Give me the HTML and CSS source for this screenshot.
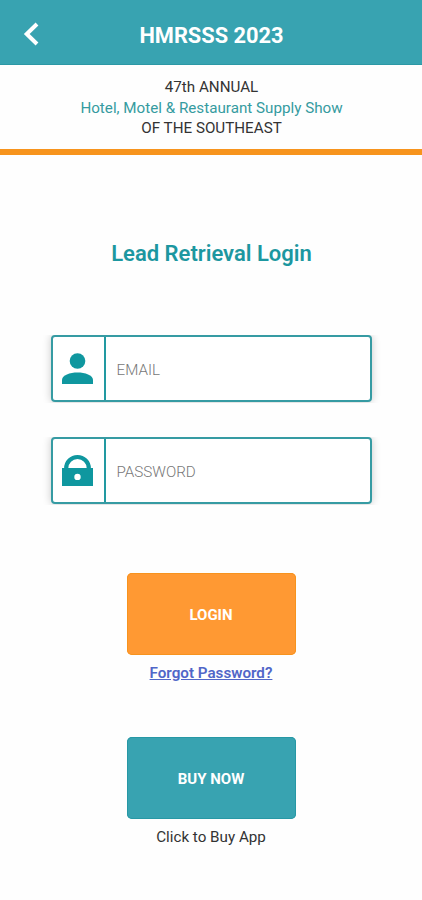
FILE: index.html
```html
<!DOCTYPE html>
<html lang="en">
<head>
  <meta charset="UTF-8" />
  <meta name="viewport" content="width=device-width, initial-scale=1.0"/>
  <title>HMRSSS 2023 - Lead Retrieval Login</title>
  <link rel="stylesheet" href="styles.css">
</head>
<body>

<header class="topbar">
  <button class="back" type="button" aria-label="Back">
    <svg width="16" height="24" viewBox="0 0 16 24"><path d="M14 2 L3.700 12 L14 22" fill="none" stroke="#fff" stroke-width="4"/></svg>
  </button>
  <h1>HMRSSS 2023</h1>
</header>

<div class="banner">
  <div class="annual">47th ANNUAL</div>
  <div class="show">Hotel, Motel &amp; Restaurant Supply Show</div>
  <div class="region">OF THE SOUTHEAST</div>
</div>

<main>
  <h2>Lead Retrieval Login</h2>

  <form class="login">
    <div class="field">
      <label class="icon" for="email">
        <svg width="32" height="32" viewBox="0 0 32 32"><circle cx="15.500" cy="8" r="7.800"/><path d="M0 31V27C0 22 8 19.500 15.500 19.500S31 22 31 27V31Z"/></svg>
      </label>
      <input type="text" id="email" placeholder="EMAIL">
    </div>
    <div class="field">
      <label class="icon" for="password">
        <svg width="32" height="32" viewBox="0 0 32 32"><path d="M4.200 14V13.300a11.300 11.300 0 0 1 22.600 0V14" fill="none" stroke="#0f979f" stroke-width="4.200"/><path fill-rule="evenodd" d="M0 13H31V31H0ZM15.500 18.700a3.200 3.200 0 1 0 0 6.400a3.200 3.200 0 1 0 0-6.400Z"/></svg>
      </label>
      <input type="password" id="password" placeholder="PASSWORD">
    </div>
    <button class="btn login-btn" type="button">LOGIN</button>
  </form>

  <a class="forgot" href="#">Forgot Password?</a>

  <button class="btn buy-btn" type="button">BUY NOW</button>
  <div class="note">Click to Buy App</div>
</main>

</body>
</html>
```

FILE: styles.css
```css
* { box-sizing: border-box; }
body {
  margin: 0;
  font-family: Roboto, "Liberation Sans", sans-serif;
  background: #fefefe;
  color: #333;
  text-align: center;
}
button { font-family: inherit; border: none; padding: 0; }
.topbar {
  display: grid;
  grid-template-columns: 62px 1fr 62px;
  align-items: center;
  height: 65px;
  padding-top: 4px;
  background: #38a3b1;
  border-bottom: 1px solid #2c98a5;
}
.back { background: none; height: 24px; }
.back svg { display: block; margin: 0 auto; overflow: visible; }
h1 { margin: 0; padding: 4px 0 0 1px; font-size: 21.8px; line-height: 26px; font-weight: 700; color: white; }
.banner {
  height: 90px;
  padding: 12px 0 0 1px;
  border-bottom: 6px solid #f7941d;
  font-size: 15.2px;
  line-height: 20.7px;
}
.show { color: #359ba0; }
main { display: flex; flex-direction: column; align-items: center; }
h2 { margin: 85px 0 0; padding-left: 1px; font-size: 22px; line-height: 28px; font-weight: 600; color: #1c97a0; }
.login {
  display: flex;
  flex-direction: column;
  align-items: center;
  margin-top: 67px;
}
.field {
  display: flex;
  width: 321px;
  height: 67px;
  margin-bottom: 35px;
  border: 2px solid #369ba3;
  border-radius: 4px;
  background: white;
  box-shadow: 0 0 8px rgba(0, 0, 0, 0.22);
  clip-path: inset(0 -10px -1px -10px);
}
.icon {
  display: flex;
  align-items: center;
  justify-content: center;
  width: 53px;
  border-right: 2px solid #2299a1;
  fill: #0f979f;
}
.icon svg { overflow: visible; }
input {
  flex: 1;
  min-width: 0;
  padding: 2px 11px 0;
  border: none;
  outline: none;
  background: none;
  font: 300 15.2px Roboto, "Liberation Sans", sans-serif;
}
input::placeholder { color: #777; }
.btn {
  width: 169px;
  height: 82px;
  padding-top: 2px;
  border-radius: 5px;
  color: white;
  font-size: 15px;
  font-weight: 700;
}
.login-btn { margin-top: 34px; background: #ff9933; box-shadow: inset 0 0 0 1px #f7931e; }
.forgot {
  margin-top: 9px;
  font-size: 15.2px;
  line-height: 18px;
  font-weight: 600;
  color: #5066c8;
}
.buy-btn { margin-top: 55px; background: #38a3b1; box-shadow: inset 0 0 0 1px #2798a5; }
.note { margin-top: 9px; font-size: 15.2px; line-height: 19px; }
```
